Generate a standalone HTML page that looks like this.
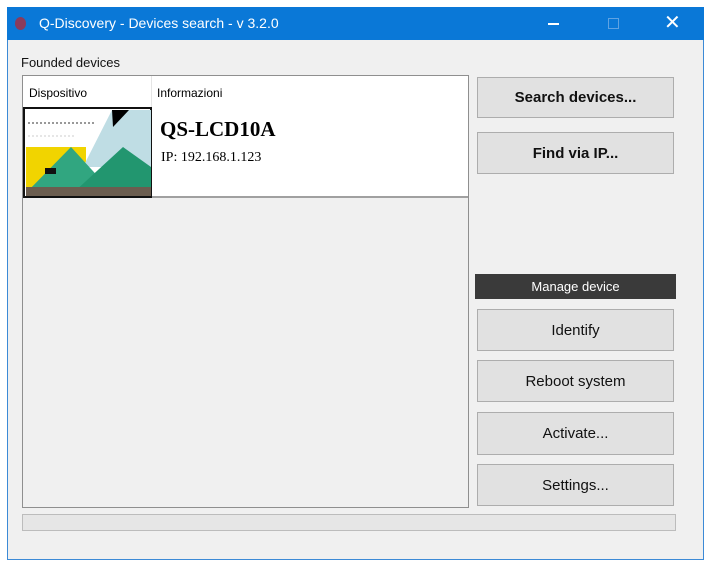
<!DOCTYPE html>
<html><head><style>
*{margin:0;padding:0;box-sizing:border-box}
body{width:711px;height:568px;background:#fff;font-family:"Liberation Sans",sans-serif;position:relative;overflow:hidden}
.win{position:absolute;left:7px;top:7px;width:697px;height:553px;background:#f0f0f0;border:1px solid #3c8ad6}
.title{position:absolute;left:7px;top:7px;width:697px;height:33px;background:#0a78d7;color:#fff;font-size:14px}
.a{position:absolute}
.btn{position:absolute;left:477px;width:197px;background:#e1e1e1;border:1px solid #adadad;font-size:15px;color:#111;display:flex;align-items:center;justify-content:center}
</style></head><body>
<div class="win"></div>
<div class="title">
 <div class="a" style="left:8px;top:10px;width:11px;height:13px;border-radius:50%;background:#8a3b5c"></div>
 <div class="a" style="left:32px;top:8px">Q-Discovery - Devices search - v 3.2.0</div>
 <div class="a" style="left:541px;top:16px;width:11px;height:2px;background:#fff"></div>
 <div class="a" style="left:601px;top:11px;width:11px;height:11px;border:1px solid #5fa3e3"></div>
 <div class="a" style="left:657px;top:3px;font-size:20px">✕</div>
</div>
<div class="a" style="left:21px;top:55px;font-size:13px;color:#111">Founded devices</div>
<div class="a" style="left:22px;top:75px;width:447px;height:433px;border:1px solid #8f8f8f;background:#f0f0f0"></div>
<div class="a" style="left:23px;top:76px;width:445px;height:122px;background:#fff;border-bottom:2px solid #a0a0a0"></div>
<div class="a" style="left:29px;top:86px;font-size:12px">Dispositivo</div>
<div class="a" style="left:157px;top:86px;font-size:12px">Informazioni</div>
<div class="a" style="left:151px;top:76px;width:1px;height:32px;background:#e5e5e5"></div>
<svg class="a" style="left:23px;top:107px" width="129" height="91" viewBox="0 0 129 91">
 <rect width="129" height="91" fill="#fff"/>
 <rect x="1" y="1" width="127" height="89" fill="none" stroke="#111" stroke-width="2"/>
 <line x1="5" y1="16" x2="72" y2="16" stroke="#333" stroke-dasharray="2 2"/>
 <line x1="5" y1="29" x2="52" y2="29" stroke="#ccc" stroke-dasharray="2 2"/>
 <rect x="3" y="40" width="60" height="40" fill="#f1d400"/>
 <polygon points="89,3 128,3 128,60 60,60" fill="#bfdde4"/>
 <polygon points="89,3 106,3 90,20" fill="#000"/>
 <polygon points="3,86 48,40 90,86" fill="#31a680"/>
 <polygon points="50,86 100,40 128,60 128,86" fill="#22966f"/>
 <rect x="3" y="80" width="125" height="9" fill="#6b5d4f"/>
 <rect x="22" y="61" width="11" height="6" fill="#111"/>
</svg>
<div class="a" style="left:160px;top:117px;font-family:'Liberation Serif',serif;font-weight:bold;font-size:21px">QS-LCD10A</div>
<div class="a" style="left:161px;top:150px;font-family:'Liberation Serif',serif;font-size:14px">IP: 192.168.1.123</div>
<div class="btn" style="top:77px;height:41px;font-weight:bold">Search devices...</div>
<div class="btn" style="top:132px;height:42px;font-weight:bold">Find via IP...</div>
<div class="a" style="left:475px;top:274px;width:201px;height:25px;background:#3a3a3a;color:#fff;font-size:13px;display:flex;align-items:center;justify-content:center">Manage device</div>
<div class="btn" style="top:309px;height:42px">Identify</div>
<div class="btn" style="top:360px;height:42px">Reboot system</div>
<div class="btn" style="top:412px;height:43px">Activate...</div>
<div class="btn" style="top:464px;height:42px">Settings...</div>
<div class="a" style="left:22px;top:514px;width:654px;height:17px;background:#e6e6e6;border:1px solid #bcbcbc"></div>
</body></html>
